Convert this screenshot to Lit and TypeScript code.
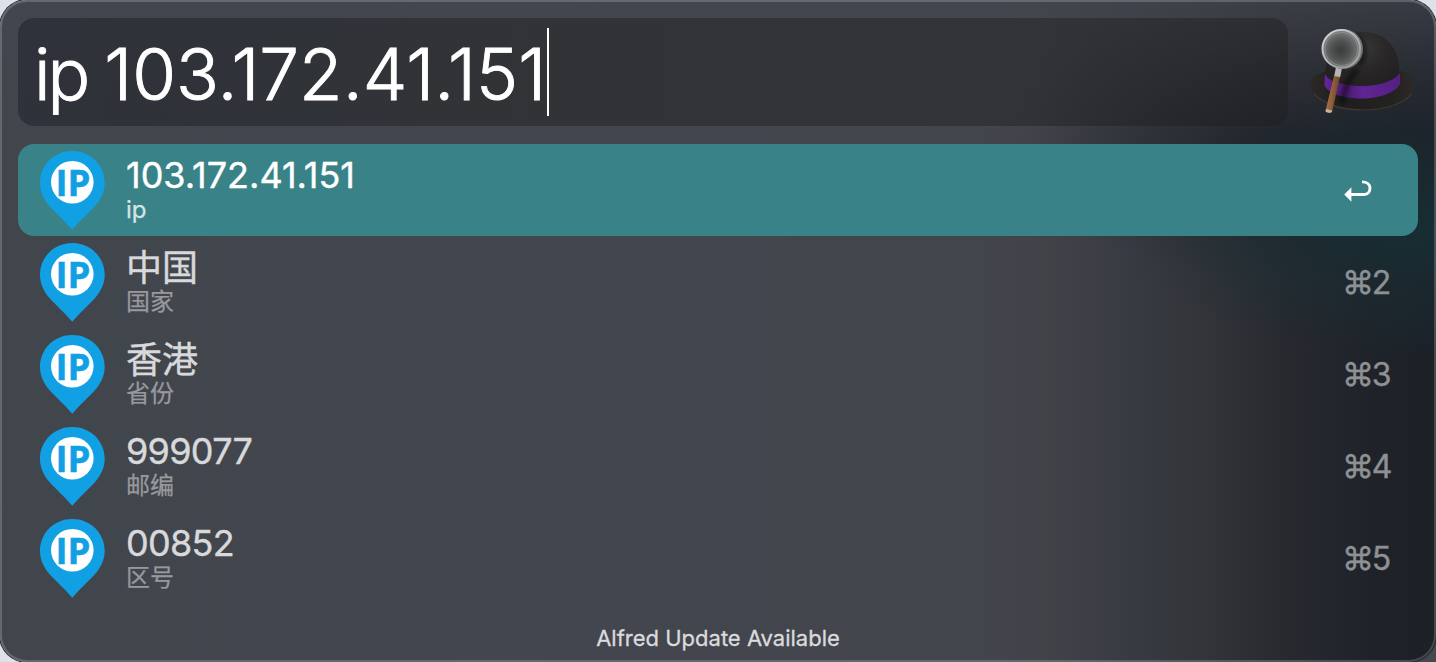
import { LitElement, html, svg, css } from "lit";
import { customElement, property } from "lit/decorators.js";
import { classMap } from "lit/directives/class-map.js";

interface Result {
  title: string;
  subtitle: string;
  key: string;
  kind: "address" | "han" | "number";
}

const RESULTS: Result[] = [
  { title: "103.172.41.151", subtitle: "ip", key: "", kind: "address" },
  { title: "中国", subtitle: "国家", key: "2", kind: "han" },
  { title: "香港", subtitle: "省份", key: "3", kind: "han" },
  { title: "999077", subtitle: "邮编", key: "4", kind: "number" },
  { title: "00852", subtitle: "区号", key: "5", kind: "number" },
];

const returnArrow = svg`
  <path d="M5 14.500H20.2C24 14.500 26 11.5 26 8.100C26 4.200 23 1.900 18 1.900" fill="none" stroke="#fff" stroke-width="2.900"/>
  <path d="M0.200 14.500L7.400 7.300V21.700Z" fill="#fff"/>`;

@customElement("ip-pin")
export class IpPin extends LitElement {
  static styles = css`
    :host { display: block; width: 66px; height: 80px; }
    .pin { display: block; }
    .label { font-family: "Open Sans", "Noto Sans", sans-serif; font-weight: 700; font-size: 36.5px; fill: #12a0e5; stroke: #12a0e5; stroke-width: 0.5px; }
  `;

  render() {
    return html`<svg class="pin" width="66" height="80" viewBox="0 0 66 80">
      <path fill="#12a0e5" d="M33.300 1C51 1 65.700 14.500 65.700 33C65.700 42 61.500 49.500 56.500 55.500C50.500 62.500 40 71.500 33.300 79.800C26.500 71.500 16 62.500 10 55.500C5 49.500 1 42 1 33C1 14.500 15.500 1 33.300 1Z"/>
      <circle cx="33.300" cy="32.200" r="21.300" fill="#fff"/>
      <text class="label" x="16.500" y="46" textLength="35" lengthAdjust="spacingAndGlyphs">IP</text>
    </svg>`;
  }
}

@customElement("bowler-hat")
export class BowlerHat extends LitElement {
  static styles = css`
    :host { display: block; width: 108px; height: 90px; }
    .hat { display: block; }
  `;

  render() {
    return html`<svg class="hat" width="108" height="90" viewBox="0 0 108 90">
      <defs>
        <radialGradient id="dome" cx=".5" cy=".25" r=".7">
          <stop offset="0" stop-color="#393939"/><stop offset=".45" stop-color="#292727"/><stop offset="1" stop-color="#211e1f"/>
        </radialGradient>
        <linearGradient id="brim" x1="0" y1="0" x2="1" y2="0">
          <stop offset="0" stop-color="#2c2928"/><stop offset=".3" stop-color="#1f1d1d"/><stop offset=".8" stop-color="#242121"/><stop offset="1" stop-color="#2d2a29"/>
        </linearGradient>
        <linearGradient id="band" x1="0" y1="0" x2="1" y2="0">
          <stop offset="0" stop-color="#63259a"/><stop offset=".3" stop-color="#4a1c72"/><stop offset=".5" stop-color="#602494"/><stop offset="1" stop-color="#542083"/>
        </linearGradient>
        <radialGradient id="lens" cx=".48" cy=".54" r=".55">
          <stop offset="0" stop-color="#3b3b3b"/><stop offset=".45" stop-color="#505151"/><stop offset="1" stop-color="#808283"/>
        </radialGradient>
        <linearGradient id="rim" x1="0" y1="0" x2="1" y2="1">
          <stop offset="0" stop-color="#d4d6d8"/><stop offset=".5" stop-color="#b5b8ba"/><stop offset=".8" stop-color="#9b9e9f"/><stop offset="1" stop-color="#c5c6c7"/>
        </linearGradient>
        <linearGradient id="wood" x1="0" y1="0" x2="1" y2=".25">
          <stop offset="0" stop-color="#b5835a"/><stop offset=".5" stop-color="#93623b"/><stop offset="1" stop-color="#68432b"/>
        </linearGradient>
        <filter id="soft" x="-50%" y="-50%" width="200%" height="200%"><feGaussianBlur stdDeviation="2"/></filter>
      </defs>
      <path d="M1.500 57C3 49 12 44 30 43H82C98 43 106 48 106.500 58C105 75 79 84 56 84C28 84 2 72 1.500 57Z" fill="url(#brim)"/>
      <path d="M6 67C17 78 35 83 56 83C77 83 98 76 104 66" fill="none" stroke="#3f3935" stroke-width="1.200"/>
      <path d="M17 51C17 24 32 5 55 5C78 5 91 22 91 42V54C85 65 70 70 52 70C35 70 20 65 17 57Z" fill="url(#dome)"/>
      <path d="M17 46C18 54 36 59 54 59C72 59 86 54 92 46V57C87 66 71 71.500 54 71.500C36 71.500 20 67 16.500 58Z" fill="url(#band)"/>
      <path d="M49 42L40 55L33 76" fill="none" stroke="#000" stroke-opacity=".45" stroke-width="6" filter="url(#soft)"/>
      <path d="M46 8C57 14 59 28 51 38" fill="none" stroke="#000" stroke-opacity=".5" stroke-width="5" filter="url(#soft)"/>
      <path d="M28 40L34 41L32 51L26 50Z" fill="#b4b5b5"/>
      <path d="M26 49L32 50L24 85Q21 87 17.500 84Z" fill="url(#wood)"/>
      <path d="M18 82L24.200 83.500L23.700 85.200Q20.500 86.500 17.600 84.800Z" fill="#c9b59e"/>
      <circle cx="35" cy="22" r="20" fill="#707374"/>
      <circle cx="33.300" cy="21.800" r="18.800" fill="url(#lens)" stroke="url(#rim)" stroke-width="2"/>
      <circle cx="33.500" cy="22" r="16.500" fill="none" stroke="#a1a4a5" stroke-opacity=".55" stroke-width="1"/>
    </svg>`;
  }
}

@customElement("result-row")
export class ResultRow extends LitElement {
  @property({ attribute: false }) item: Result = RESULTS[0];
  @property({ type: Boolean }) selected = false;

  static styles = css`
    :host { display: block; }
    .row {
      display: flex;
      align-items: center;
      height: 92px;
      box-sizing: border-box;
      padding: 0 28px 0 21px;
      border-radius: 16px;
      color: #d8d9db;
    }
    .row.selected { background: #398287; color: #fff; }
    .texts { flex: 1; display: flex; flex-direction: column; margin-left: 21px; white-space: nowrap; padding-bottom: 3px; }
    .title { font-size: 36px; line-height: 42px; height: 43px; -webkit-text-stroke: 0.4px currentColor; }
    .title.number { letter-spacing: -0.7px; }
    .title.han { padding-top: 1px; height: 42px; }
    .subtitle { font-size: 24px; line-height: 26px; height: 26px; color: #97999d; -webkit-text-stroke: 0.25px currentColor; }
    .selected .subtitle { color: #d4e5e7; }
    .shortcut {
      display: flex;
      width: 46px;
      align-items: center;
      font-size: 32px;
      letter-spacing: -2.4px;
      line-height: 40px;
      padding-top: 2px;
      box-sizing: border-box;
      color: #8e9194;
      white-space: nowrap;
      -webkit-text-stroke: 0.4px currentColor;
    }
    .keys { margin-left: -2px; }
    .return { display: block; }
  `;

  render() {
    const { title, subtitle, key, kind } = this.item;
    return html`<div class=${classMap({ row: true, selected: this.selected })}>
      <ip-pin></ip-pin>
      <div class="texts">
        <div class=${classMap({ title: true, [kind]: true })}>${title}</div>
        <div class="subtitle">${subtitle}</div>
      </div>
      <div class="shortcut">
        ${this.selected
          ? html`<svg class="return" width="28" height="22" viewBox="0 0 28 22">${returnArrow}</svg>`
          : html`<span class="keys">⌘${key}</span>`}
      </div>
    </div>`;
  }
}

@customElement("app-root")
export class AppRoot extends LitElement {
  static styles = css`
    :host {
      display: block;
      width: 1436px;
      height: 662px;
      overflow: hidden;
      font-family: Inter, "Noto Sans CJK SC", sans-serif;
      background: linear-gradient(135deg, #dde1e9 0 75%, #45484c 90%);
    }
    .window {
      display: flex;
      flex-direction: column;
      box-sizing: border-box;
      height: 662px;
      padding: 18px 18px 0;
      border-radius: 27px;
      box-shadow: 0 0 0 1px #25282c, inset 0 0 0 2px rgba(255, 255, 255, 0.19);
      background:
        linear-gradient(180deg, rgba(67, 70, 78, 0.72) 0, rgba(67, 70, 78, 0.3) 70px, rgba(67, 70, 78, 0) 135px),
        radial-gradient(ellipse 320px 130px at 1436px 230px, rgba(22, 48, 53, 0.85), rgba(22, 48, 53, 0) 100%),
        radial-gradient(ellipse 280px 150px at 1300px 135px, rgba(30, 34, 42, 0.7), rgba(30, 34, 42, 0) 100%),
        linear-gradient(90deg, #41454c 0, #43464e 500px, #43454d 980px, #424349 1045px, #393b43 1125px, #323439 1205px, #27292f 1290px, #1f2329 1370px, #1c2027 1436px);
    }
    .header { display: flex; align-items: flex-start; height: 126px; }
    .query {
      display: flex;
      align-items: center;
      box-sizing: border-box;
      width: 1270px;
      height: 108px;
      padding-left: 16px;
      border-radius: 16px;
      background: linear-gradient(90deg, rgba(15, 18, 27, 0.38), rgba(27, 28, 25, 0.45) 40%, rgba(27, 28, 28, 0.42));
      color: #fff;
      font-size: 71px;
      font-weight: 300;
      line-height: 88px;
      white-space: nowrap;
    }
    .typed { padding-top: 4px; white-space: pre; -webkit-text-stroke: 0.9px #fff; }
    .keyword { letter-spacing: -3px; }
    .caret { width: 2px; height: 88px; margin-left: 1px; background: #fff; }
    .logo { margin: 9px 0 0 20px; }
    .footer { height: 58px; padding-top: 5px; box-sizing: border-box; text-align: center; font-size: 22px; line-height: 58px; color: #dadbdd; -webkit-text-stroke: 0.3px currentColor; }
  `;

  render() {
    return html`<div class="window">
      <div class="header">
        <div class="query"><span class="typed"><span class="keyword">ip </span>103.172.41.151</span><span class="caret"></span></div>
        <bowler-hat class="logo"></bowler-hat>
      </div>
      <div class="results">
        ${RESULTS.map((item, i) => html`<result-row .item=${item} ?selected=${i === 0}></result-row>`)}
      </div>
      <div class="footer">Alfred Update Available</div>
    </div>`;
  }
}
